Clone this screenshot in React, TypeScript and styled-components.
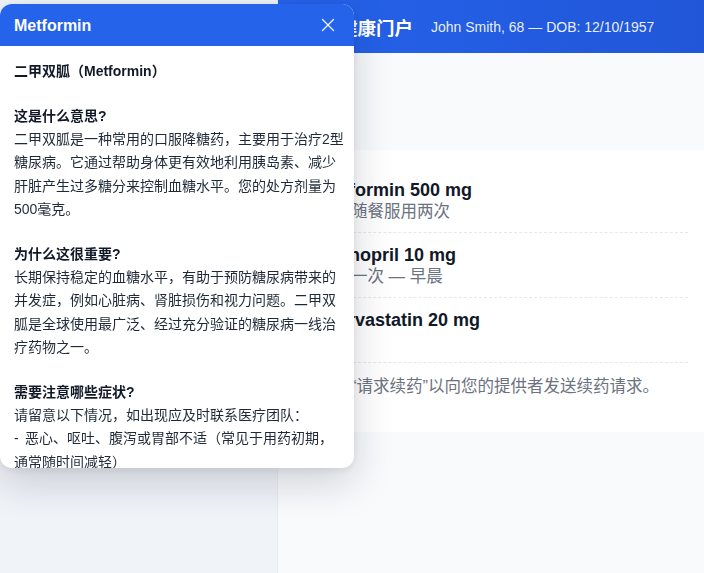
import React from 'react';
import styled, { createGlobalStyle } from 'styled-components';

const GlobalStyle = createGlobalStyle`
  * { box-sizing: border-box; }
  html, body { margin: 0; padding: 0; }
  body {
    font-family: "Liberation Sans", "Noto Sans CJK SC", sans-serif;
    color: #1f2937;
    background: #f8fafc;
  }
`;

const Shell = styled.div`
  display: flex;
  height: 100vh;
  overflow: hidden;
`;

const Sidebar = styled.aside`
  width: 278px;
  flex-shrink: 0;
  background: #f0f3f8;
  border-right: 1px solid #e6ebf2;
`;

const Main = styled.main`
  flex: 1;
  min-width: 0;
  display: flex;
  flex-direction: column;
  background: #f8fafc;
`;

const TopBar = styled.header`
  height: 53px;
  flex-shrink: 0;
  display: flex;
  align-items: center;
  gap: 18px;
  padding: 0 24px;
  background: linear-gradient(90deg, #2563eb 0%, #2156d8 100%);
  color: #fff;
`;

const PortalTitle = styled.h1`
  margin: 0;
  font-size: 18.5px;
  font-weight: 700;
  white-space: nowrap;
`;

const PatientInfo = styled.span`
  font-size: 14px;
  color: rgba(255, 255, 255, 0.92);
  white-space: nowrap;
`;

const Content = styled.div`
  padding: 97px 0 0 24px;
`;

const Card = styled.section`
  background: #fff;
  border-radius: 12px 0 0 12px;
  padding: 18px 16px 21px;
`;

const MedRow = styled.div`
  padding: 11px 0 10px;
  border-bottom: 1px dashed #e5e7eb;
`;

const MedName = styled.div`
  font-size: 18px;
  font-weight: 700;
  line-height: 22px;
  color: #111827;
  white-space: nowrap;
`;

const MedNote = styled.div`
  font-size: 16.5px;
  line-height: 21px;
  color: #6b7280;
  white-space: nowrap;
`;

const Hint = styled.p`
  margin: 0;
  padding: 12px 0 14px;
  font-size: 16.5px;
  line-height: 22px;
  color: #6b7280;
  white-space: nowrap;
`;

const Popover = styled.div`
  position: fixed;
  left: 0;
  top: 4px;
  width: 354px;
  height: 464px;
  display: flex;
  flex-direction: column;
  background: #fff;
  border-radius: 12px;
  overflow: hidden;
  box-shadow: 0 14px 40px rgba(15, 23, 42, 0.18), 0 2px 8px rgba(15, 23, 42, 0.08);
`;

const PopoverHeader = styled.div`
  height: 42px;
  flex-shrink: 0;
  display: flex;
  align-items: center;
  justify-content: space-between;
  padding: 0 14px;
  background: #2563eb;
`;

const PopoverTitle = styled.span`
  font-size: 16px;
  font-weight: 700;
  color: #fff;
  margin-top: 1px;
`;

const CloseButton = styled.button`
  display: flex;
  align-items: center;
  justify-content: center;
  width: 22px;
  height: 22px;
  padding: 0;
  margin-right: 1px;
  border: none;
  background: none;
  color: rgba(255, 255, 255, 0.9);
  cursor: pointer;
`;

const PopoverBody = styled.div`
  flex: 1;
  overflow: hidden;
  padding: 14px 9px 0 14px;
  font-size: 14px;
  line-height: 23.3px;
  word-spacing: 2.5px;
`;

const DrugTitle = styled.div`
  font-weight: 700;
  color: #111827;
`;

const Section = styled.div`
  margin-top: 21.5px;
`;

const SectionHeading = styled.div`
  font-weight: 700;
  color: #111827;
`;

const SectionText = styled.div`
  white-space: pre-wrap;
  color: #1f2937;
`;

const meds = [
  { name: 'Metformin 500 mg', note: '每日随餐服用两次' },
  { name: 'Lisinopril 10 mg', note: '每日一次 — 早晨' },
  { name: 'Atorvastatin 20 mg', note: '睡前' },
];

const sections = [
  {
    heading: '这是什么意思?',
    text: '二甲双胍是一种常用的口服降糖药，主要用于治疗2型糖尿病。它通过帮助身体更有效地利用胰岛素、减少肝脏产生过多糖分来控制血糖水平。您的处方剂量为500毫克。',
  },
  {
    heading: '为什么这很重要?',
    text: '长期保持稳定的血糖水平，有助于预防糖尿病带来的并发症，例如心脏病、肾脏损伤和视力问题。二甲双胍是全球使用最广泛、经过充分验证的糖尿病一线治疗药物之一。',
  },
  {
    heading: '需要注意哪些症状?',
    text: '请留意以下情况，如出现应及时联系医疗团队：\n- 恶心、呕吐、腹泻或胃部不适（常见于用药初期，通常随时间减轻）\n- 异常疲倦、肌肉疼痛或呼吸困难\n- 头晕、出汗、心慌等低血糖症状',
  },
];

const CloseIcon = () => (
  <svg width="22" height="22" viewBox="0 0 24 24" fill="none" stroke="currentColor" strokeWidth="1.5" strokeLinecap="round">
    <path d="M18 6 6 18" />
    <path d="m6 6 12 12" />
  </svg>
);

export default function App() {
  return (
    <>
      <GlobalStyle />
      <Shell>
        <Sidebar />
        <Main>
          <TopBar>
            <PortalTitle>患者健康门户</PortalTitle>
            <PatientInfo>John Smith, 68 — DOB: 12/10/1957</PatientInfo>
          </TopBar>
          <Content>
            <Card>
              {meds.map((med) => (
                <MedRow key={med.name}>
                  <MedName>{med.name}</MedName>
                  <MedNote>{med.note}</MedNote>
                </MedRow>
              ))}
              <Hint>点击“请求续药”以向您的提供者发送续药请求。</Hint>
            </Card>
          </Content>
        </Main>
      </Shell>
      <Popover role="dialog">
        <PopoverHeader>
          <PopoverTitle>Metformin</PopoverTitle>
          <CloseButton aria-label="关闭">
            <CloseIcon />
          </CloseButton>
        </PopoverHeader>
        <PopoverBody>
          <DrugTitle>二甲双胍（Metformin）</DrugTitle>
          {sections.map((s) => (
            <Section key={s.heading}>
              <SectionHeading>{s.heading}</SectionHeading>
              <SectionText>{s.text}</SectionText>
            </Section>
          ))}
        </PopoverBody>
      </Popover>
    </>
  );
}
